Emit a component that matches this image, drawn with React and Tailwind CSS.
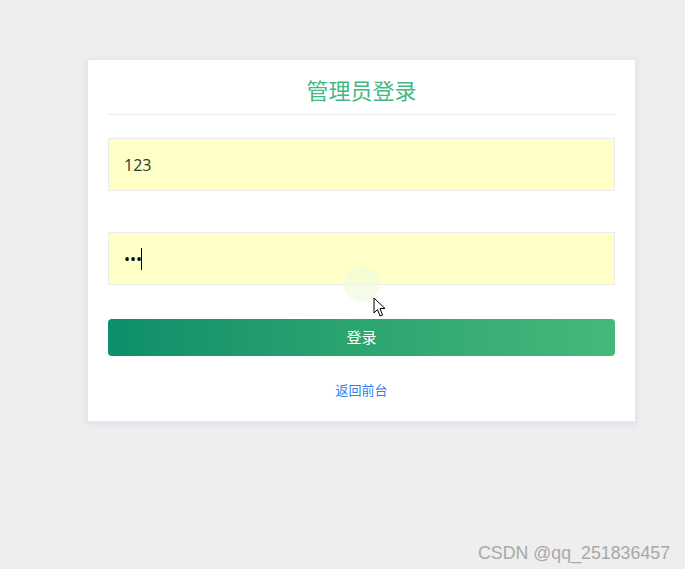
import { useState } from 'react';

const FONT = { fontFamily: '"Open Sans", "Noto Sans CJK SC", sans-serif' };

export default function App() {
  const [user, setUser] = useState('123');
  const [pwd, setPwd] = useState('123');

  return (
    <div className="relative min-h-[569px] w-full bg-[#eeeeee]" style={FONT}>
      <div className="pt-[59px] pl-[87px]">
        <div className="w-[549px] bg-white border border-[#e3e7ef] shadow-[0_2px_6px_rgba(200,210,230,0.6)] pl-5 pr-[20px] pt-[14px] pb-[20px]">
          {/* Title */}
          <div className="border-b border-[#eaecef] pb-[7px] text-center">
            <h2 className="text-[22px] leading-[33px] text-[#42b983]">管理员登录</h2>
          </div>

          {/* Fields */}
          <div className="mt-[23px] flex flex-col gap-[41px]">
            <input
              value={user}
              onChange={(e) => setUser(e.target.value)}
              className="h-[53px] w-full border border-[#ececec] bg-[#ffffc8] px-[15px] text-[16px] text-[#333] outline-none"
            />
            <div className="relative">
              <input
                type="password"
                value={pwd}
                onChange={(e) => setPwd(e.target.value)}
                className="h-[53px] w-full border border-[#ececec] bg-[#ffffc8] px-[15px] text-[16px] text-black outline-none"
              />
              <span className="absolute left-[33px] top-[16px] h-[22px] w-px bg-black" />
            </div>
          </div>

          {/* Submit */}
          <button className="mt-[34px] h-[37px] w-full rounded-[4px] bg-gradient-to-r from-[#0b8e6b] via-[#2ca570] to-[#45b87b] text-[15px] text-white">
            登录
          </button>

          <div className="mt-[21px] text-center">
            <a href="#" className="text-[13px] text-[#2c82f0]">返回前台</a>
          </div>
        </div>
      </div>

      {/* click ripple + mouse cursor */}
      <div className="absolute left-[344px] top-[266px] h-[36px] w-[36px] rounded-full bg-[#f0fadc] opacity-60" />
      <svg className="absolute left-[373px] top-[297px]" width="13" height="21" viewBox="0 0 13 21">
        <path d="M1 1 L1 16 L4.5 12.5 L7 19 L9.5 18 L7 11.5 L12 11.5 Z" fill="white" stroke="black" strokeWidth="1" strokeLinejoin="round" />
      </svg>

      <div
        className="absolute left-[478px] top-[540px] text-[17.8px] text-[#a8a8a8]"
        style={{ fontFamily: '"Liberation Sans", Arial, sans-serif' }}
      >
        CSDN @qq_251836457
      </div>
    </div>
  );
}
